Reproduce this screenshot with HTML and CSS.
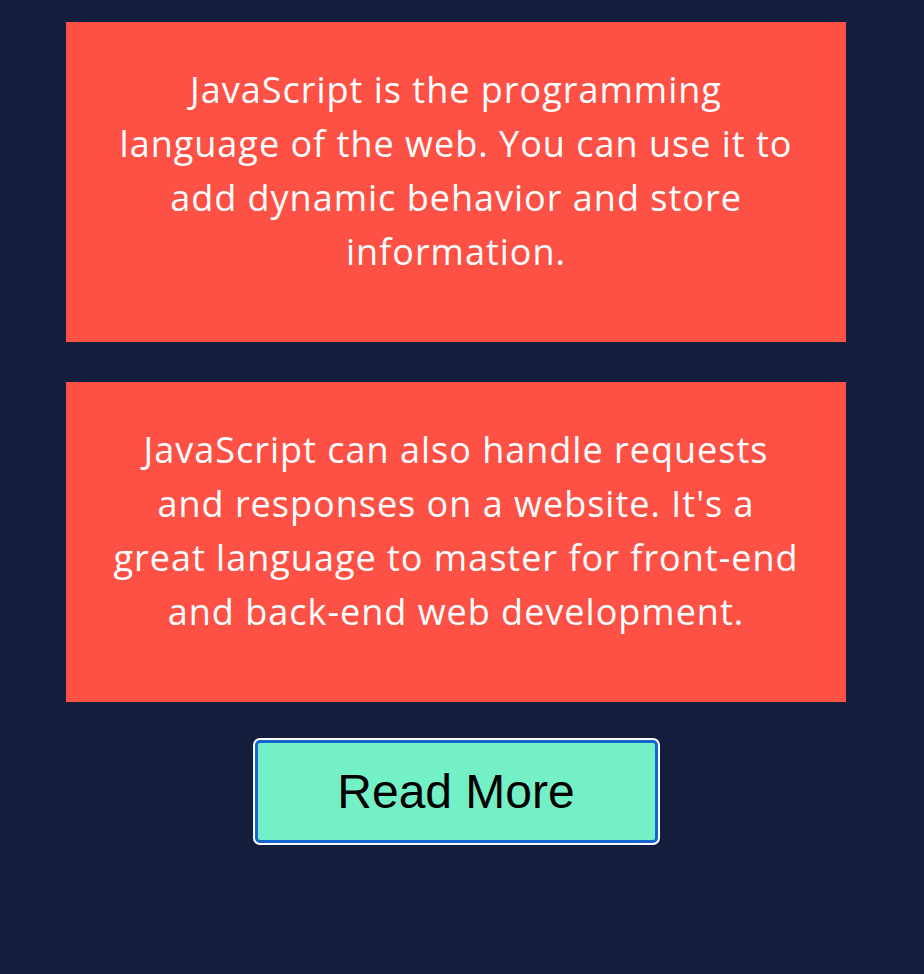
FILE: index.html
```html
<!DOCTYPE html>
<html>
<head>
<meta charset="utf-8">
<link rel="stylesheet" href="styles.css">
</head>
<body>
<main class="wrap">
  <section class="card"><p>JavaScript is the programming language of the web. You can use it to add dynamic behavior and store information.</p></section>
  <section class="card"><p>JavaScript can also handle requests and responses on a website. It's a great language to master for front-end and back-end web development.</p></section>
  <button class="more">Read More</button>
</main>
</body>
</html>
```
FILE: styles.css
```css
html, body { margin: 0; padding: 0; }
body { background: #141d3c; min-height: 974px; }
.wrap {
  width: 780px;
  margin-left: 66px;
  padding-top: 22px;
  display: flex;
  flex-direction: column;
  align-items: center;
  gap: 40px;
}
.card {
  width: 780px;
  height: 320px;
  box-sizing: border-box;
  background: #fe5146;
  padding: 41px 43px 0;
}
.card p {
  margin: 0;
  color: #fff;
  font-family: "Open Sans", sans-serif;
  font-size: 36px;
  letter-spacing: 1px;
  line-height: 54px;
  text-align: center;
}
.more {
  margin-top: -2px;
  width: 403px;
  height: 103px;
  box-sizing: border-box;
  background: #74f0c6;
  border: 3px solid #1766d0;
  border-radius: 5px;
  box-shadow: 0 0 0 2px #fff;
  font-family: "Liberation Sans", Arial, sans-serif;
  font-size: 48px;
  color: #000;
  padding: 0;
}
```
